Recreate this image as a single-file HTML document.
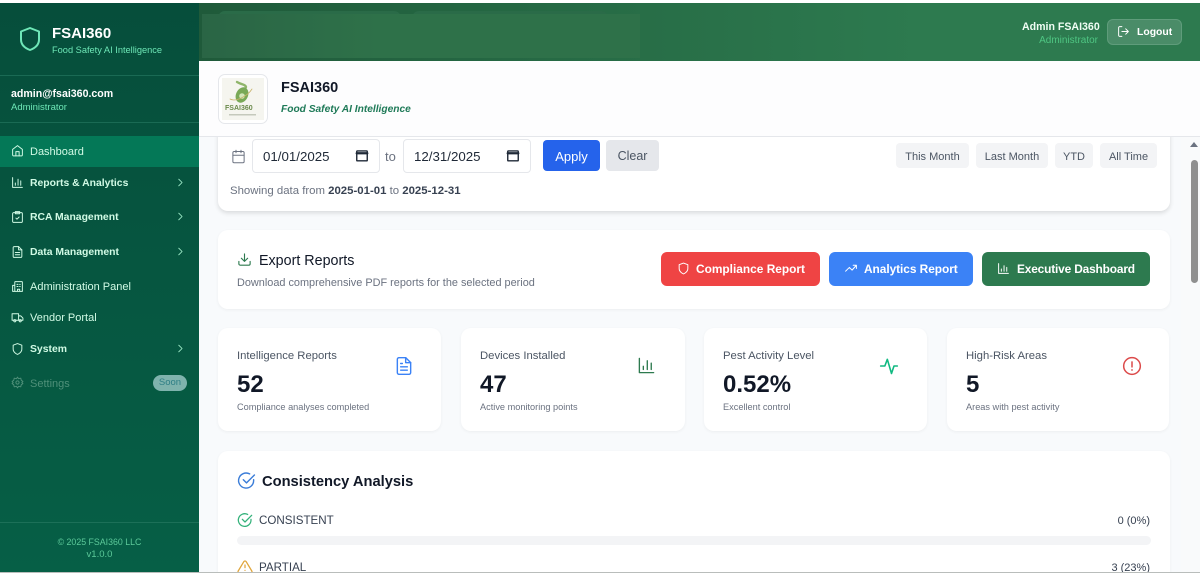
<!DOCTYPE html>
<html lang="en"><head><meta charset="utf-8"><title>FSAI360</title>
<style>
*{box-sizing:border-box;margin:0;padding:0}
html,body{width:1200px;height:573px;overflow:hidden;background:#fff;font-family:"Liberation Sans",sans-serif}
#r{position:relative;width:1200px;height:573px;overflow:hidden}
.a{position:absolute}
.t{position:absolute;white-space:nowrap;line-height:1}
svg{position:absolute;fill:none;stroke:currentColor;stroke-width:2;stroke-linecap:round;stroke-linejoin:round}
#side{left:0;top:3px;width:199px;height:569px;background:linear-gradient(180deg,#064e3b,#065f46)}
.nav{color:#d1fae5;font-size:11px}
.nb{font-weight:bold;font-size:10.4px;color:#d1fae5}
.card{position:absolute;background:#fff;border-radius:10px;box-shadow:0 1px 3px rgba(0,0,0,.05)}
.chip{position:absolute;top:143px;height:25px;background:#f3f4f6;border-radius:4px;color:#4b5563;font-size:11px;line-height:28px;text-align:center}
.inp{position:absolute;top:139px;height:34px;background:#fff;border:1px solid #e5e7eb;border-radius:4px;font-size:13.3px;color:#1f2937;line-height:34px;padding-left:10px}
.btn{position:absolute;top:252px;height:34px;border-radius:6px;color:#fff;font-size:11.9px;font-weight:bold;line-height:35px}
.lab{font-size:11.3px;color:#4b5563;top:351px}
.num{font-size:24px;font-weight:bold;color:#111827;top:373px}
.sub{font-size:9.2px;color:#6b7280;top:403px}
</style></head><body><div id="r">
<div class="a" style="left:0;top:0;width:1200px;height:3px;background:#fff"></div>

<!-- main background -->
<div class="a" style="left:199px;top:61px;width:1001px;height:511px;background:#f8fafc"></div>

<!-- top header -->
<div class="a" style="left:199px;top:3px;width:1001px;height:58px;background:linear-gradient(90deg,#1f5a3a,#2d7a4f 72%,#2d7a4f)"></div>
<div class="a" style="left:218px;top:11px;width:183px;height:10px;border-radius:7px 7px 0 0;background:#2a6b48"></div>
<div class="a" style="left:412px;top:11px;width:196px;height:10px;border-radius:7px 7px 0 0;background:#2a6b48"></div>
<div class="a" style="left:202px;top:14px;width:438px;height:44px;background:linear-gradient(90deg,#2a6545,#2e7149 40%)"></div>
<div class="t" style="left:1022px;top:22px;font-size:10.6px;font-weight:bold;color:#f0fdf4">Admin FSAI360</div>
<div class="t" style="right:102px;top:36px;font-size:10px;color:#4fc683">Administrator</div>
<div class="a" style="left:1107px;top:19px;width:75px;height:26px;border-radius:6px;background:#4a8c68;border:1px solid #5f9c7b"></div>
<svg style="left:1117px;top:25px;color:#fff;stroke-width:1.8" width="13" height="13" viewBox="0 0 24 24"><path d="M9 21H5a2 2 0 0 1-2-2V5a2 2 0 0 1 2-2h4M16 17l5-5-5-5M21 12H9"/></svg>
<div class="t" style="left:1137px;top:28px;font-size:10.4px;font-weight:bold;color:#fff">Logout</div>

<!-- page title bar -->
<div class="a" style="left:199px;top:61px;width:1001px;height:76px;background:#fdfdfe;border-bottom:1px solid #e5e7eb;z-index:3"></div>
<div class="a" style="left:218px;top:74px;width:50px;height:50px;background:#fff;border:1px solid #e5e7eb;border-radius:7px;z-index:4"></div>
<svg style="left:222px;top:78px;z-index:5;stroke-width:1.5" width="42" height="42" viewBox="0 0 42 42">
<rect x="0" y="0" width="42" height="42" fill="#f5f5ef" stroke="none"/>
<path d="M15 4c5 3 8 2 9 5-1 3-4 4-6 5" stroke="#8fb56a" stroke-width="2.4"/>
<ellipse cx="20" cy="17" rx="6" ry="8" fill="#79a957" stroke="none" transform="rotate(25 20 17)"/>
<circle cx="20" cy="18" r="2.8" fill="#d3e6bb" stroke="none"/>
<path d="M8 21c5 3 17-2 22-10" stroke="#c9b36a" stroke-width=".8"/>
<text x="3" y="32" font-family="Liberation Sans" font-weight="bold" font-size="7" fill="#6b8a4c" stroke="none">FSAI360</text>
<rect x="7" y="36" width="27" height="1.5" fill="#c5c9bc" stroke="none"/>
</svg>
<div class="t" style="left:281px;top:81px;font-size:14.5px;font-weight:bold;color:#111827;z-index:4">FSAI360</div>
<div class="t" style="left:281px;top:105px;font-size:10.2px;font-weight:bold;font-style:italic;color:#1f7a58;z-index:4">Food Safety AI Intelligence</div>

<!-- date filter card -->
<div class="card" style="left:218px;top:120px;width:952px;height:91px;box-shadow:0 2px 5px rgba(0,0,0,.13)"></div>
<svg style="left:231px;top:149px;color:#6b7280;stroke-width:1.6" width="15" height="15" viewBox="0 0 24 24"><rect x="3" y="4" width="18" height="18" rx="2"/><path d="M16 2v4M8 2v4M3 10h18"/></svg>
<div class="inp" style="left:252px;width:128px">01/01/2025</div>
<svg style="left:355px;top:148px;color:#1f2937;stroke-width:2.4" width="14" height="14" viewBox="0 0 24 24"><rect x="3" y="5" width="18" height="17" rx="1"/><path d="M3 9h18" stroke-width="4"/></svg>
<div class="t" style="left:385px;top:150px;font-size:13px;color:#6b7280">to</div>
<div class="inp" style="left:403px;width:128px">12/31/2025</div>
<svg style="left:506px;top:148px;color:#1f2937;stroke-width:2.4" width="14" height="14" viewBox="0 0 24 24"><rect x="3" y="5" width="18" height="17" rx="1"/><path d="M3 9h18" stroke-width="4"/></svg>
<div class="a" style="left:543px;top:140px;width:57px;height:31px;background:#2563eb;border-radius:4px;color:#fff;font-size:13px;text-align:center;line-height:33px">Apply</div>
<div class="a" style="left:606px;top:140px;width:53px;height:31px;background:#e5e7eb;border-radius:4px;color:#4b5563;font-size:12.5px;text-align:center;line-height:33px">Clear</div>
<div class="chip" style="left:896px;width:73px">This Month</div>
<div class="chip" style="left:976px;width:72px">Last Month</div>
<div class="chip" style="left:1055px;width:38px">YTD</div>
<div class="chip" style="left:1100px;width:57px">All Time</div>
<div class="t" style="left:230px;top:186px;font-size:11.4px;color:#6b7280">Showing data from <b style="color:#374151">2025-01-01</b> to <b style="color:#374151">2025-12-31</b></div>

<!-- export card -->
<div class="card" style="left:218px;top:230px;width:952px;height:79px"></div>
<svg style="left:237px;top:252px;color:#2d7a4f;stroke-width:1.8" width="15" height="15" viewBox="0 0 24 24"><path d="M21 15v4a2 2 0 0 1-2 2H5a2 2 0 0 1-2-2v-4M7 10l5 5 5-5M12 15V3"/></svg>
<div class="t" style="left:259px;top:254px;font-size:14.3px;color:#111827">Export Reports</div>
<div class="t" style="left:237px;top:278px;font-size:10.9px;color:#6b7280">Download comprehensive PDF reports for the selected period</div>
<div class="btn" style="left:661px;width:159px;background:#ef4444;padding-left:35px">Compliance Report</div>
<svg style="left:677px;top:262px;color:#fff;stroke-width:1.8" width="13" height="13" viewBox="0 0 24 24"><path d="M12 22s8-3 8-10V5l-8-3-8 3v7c0 7 8 10 8 10z"/></svg>
<div class="btn" style="left:829px;width:144px;background:#3b82f6;padding-left:35px;letter-spacing:-.05px">Analytics Report</div>
<svg style="left:844px;top:262px;color:#fff;stroke-width:1.8" width="14" height="13" viewBox="0 0 24 24"><path d="M2 17l7-7 5 5 8-9M16 6h6v6"/></svg>
<div class="btn" style="left:982px;width:168px;background:#2d7a4f;padding-left:35px;letter-spacing:-.16px">Executive Dashboard</div>
<svg style="left:997px;top:262px;color:#fff;stroke-width:1.8" width="13" height="13" viewBox="0 0 24 24"><path d="M3 3v18h18M8 17v-4M13 17V7M18 17v-7"/></svg>

<!-- stat cards -->
<div class="card" style="left:218px;top:328px;width:223px;height:103px"></div>
<div class="card" style="left:461px;top:328px;width:224px;height:103px"></div>
<div class="card" style="left:704px;top:328px;width:223px;height:103px"></div>
<div class="card" style="left:947px;top:328px;width:222px;height:103px"></div>
<div class="t lab" style="left:237px">Intelligence Reports</div>
<div class="t num" style="left:237px">52</div>
<div class="t sub" style="left:237px">Compliance analyses completed</div>
<svg style="left:394px;top:356px;color:#3b82f6;stroke-width:1.7" width="20" height="20" viewBox="0 0 24 24"><path d="M14 2H6a2 2 0 0 0-2 2v16a2 2 0 0 0 2 2h12a2 2 0 0 0 2-2V8z"/><path d="M14 2v6h6M8 13h8M8 17h8M8 9h2"/></svg>
<div class="t lab" style="left:480px">Devices Installed</div>
<div class="t num" style="left:480px">47</div>
<div class="t sub" style="left:480px">Active monitoring points</div>
<svg style="left:637px;top:356px;color:#2d7a4f;stroke-width:1.7" width="19" height="19" viewBox="0 0 24 24"><path d="M3 3v18h18M8 17v-4M13 17V6M18 17v-8"/></svg>
<div class="t lab" style="left:723px">Pest Activity Level</div>
<div class="t num" style="left:723px">0.52%</div>
<div class="t sub" style="left:723px">Excellent control</div>
<svg style="left:879px;top:356px;color:#10b981;stroke-width:1.9" width="20" height="20" viewBox="0 0 24 24"><path d="M2 12h5l3-8 5 17 3-9h4"/></svg>
<div class="t lab" style="left:966px">High-Risk Areas</div>
<div class="t num" style="left:966px">5</div>
<div class="t sub" style="left:966px">Areas with pest activity</div>
<svg style="left:1122px;top:356px;color:#dc4a4a;stroke-width:1.8" width="20" height="20" viewBox="0 0 24 24"><circle cx="12" cy="12" r="10"/><path d="M12 7v6M12 16.5v.5"/></svg>

<!-- consistency -->
<div class="card" style="left:218px;top:451px;width:952px;height:130px"></div>
<svg style="left:237px;top:471px;color:#3b7dd8;stroke-width:1.8" width="19" height="19" viewBox="0 0 24 24"><path d="M21 11v1a9.5 9.5 0 1 1-5-8.3"/><path d="M8 11l4 4 10-10"/></svg>
<div class="t" style="left:262px;top:475px;font-size:14.7px;font-weight:bold;color:#111827">Consistency Analysis</div>
<svg style="left:237px;top:512px;color:#34b27b;stroke-width:1.9" width="16" height="16" viewBox="0 0 24 24"><path d="M21 11v1a9.5 9.5 0 1 1-5-8.3"/><path d="M8 11l4 4 10-10"/></svg>
<div class="t" style="left:259px;top:515px;font-size:11.6px;color:#374151">CONSISTENT</div>
<div class="t" style="right:50px;top:516px;font-size:11px;color:#374151">0 (0%)</div>
<div class="a" style="left:237px;top:536px;width:914px;height:9px;border-radius:5px;background:#f3f4f6"></div>
<svg style="left:237px;top:559px;color:#e0a63c;stroke-width:1.9" width="16" height="16" viewBox="0 0 24 24"><path d="M10.3 3.9L1.8 18a2 2 0 0 0 1.7 3h17a2 2 0 0 0 1.7-3L13.7 3.9a2 2 0 0 0-3.4 0zM12 9v4M12 17h.01"/></svg>
<div class="t" style="left:259px;top:562px;font-size:11.6px;color:#374151">PARTIAL</div>
<div class="t" style="right:50px;top:563px;font-size:11px;color:#374151">3 (23%)</div>

<!-- scrollbar -->
<div class="a" style="left:1181px;top:137px;width:19px;height:435px;background:#f9fafb"></div>
<div class="a" style="left:1190px;top:142px;width:0;height:0;border-left:4px solid transparent;border-right:4px solid transparent;border-bottom:5px solid #6b7280"></div>
<div class="a" style="left:1191px;top:160px;width:7px;height:123px;border-radius:4px;background:#8f8f8f"></div>

<!-- sidebar -->
<div id="side" class="a"></div>
<svg style="left:19px;top:26px;color:#6ee7b7;stroke-width:2" width="22" height="26" viewBox="0 0 22 26"><path d="M11 2l9 3.5v8c0 6-5 9-9 10.5-4-1.5-9-4.5-9-10.500v-8z"/></svg>
<div class="t" style="left:52px;top:26px;font-size:15px;font-weight:bold;color:#fff">FSAI360</div>
<div class="t" style="left:52px;top:46px;font-size:9.25px;color:#6ee7b7">Food Safety AI Intelligence</div>
<div class="a" style="left:0;top:75px;width:199px;height:1px;background:#1a6a54"></div>
<div class="t" style="left:11px;top:89px;font-size:10.6px;font-weight:bold;color:#fff">admin@fsai360.com</div>
<div class="t" style="left:11px;top:103px;font-size:9.5px;color:#6ee7b7">Administrator</div>
<div class="a" style="left:0;top:122px;width:199px;height:1px;background:#1a6a54"></div>
<div class="a" style="left:0;top:136px;width:199px;height:31px;background:#047857"></div>

<svg style="left:11px;top:144px;color:#d1fae5;stroke-width:1.8" width="13" height="13" viewBox="0 0 24 24"><path d="M3 10l9-7 9 7v10a2 2 0 0 1-2 2H5a2 2 0 0 1-2-2z"/><path d="M9 22v-8h6v8"/></svg>
<div class="t nav" style="left:30px;top:147px">Dashboard</div>
<svg style="left:11px;top:176px;color:#d1fae5;stroke-width:1.8" width="13" height="13" viewBox="0 0 24 24"><path d="M3 3v18h18M8 17v-4M13 17V6M18 17v-8"/></svg>
<div class="t nb" style="left:30px;top:179px">Reports &amp; Analytics</div>
<svg style="left:175px;top:177px;color:#a7f3d0" width="10" height="11" viewBox="0 0 24 24"><path d="M9 4l8 8-8 8"/></svg>
<svg style="left:11px;top:210px;color:#d1fae5;stroke-width:1.8" width="13" height="14" viewBox="0 0 24 24"><rect x="3" y="4" width="18" height="18" rx="2"/><path d="M8 2h8v4H8zM9 14l2 2 4-4"/></svg>
<div class="t nb" style="left:30px;top:213px">RCA Management</div>
<svg style="left:175px;top:211px;color:#a7f3d0" width="10" height="11" viewBox="0 0 24 24"><path d="M9 4l8 8-8 8"/></svg>
<svg style="left:11px;top:245px;color:#d1fae5;stroke-width:1.8" width="13" height="14" viewBox="0 0 24 24"><path d="M14 2H6a2 2 0 0 0-2 2v16a2 2 0 0 0 2 2h12a2 2 0 0 0 2-2V8z"/><path d="M14 2v6h6M8 13h8M8 17h8"/></svg>
<div class="t nb" style="left:30px;top:248px">Data Management</div>
<svg style="left:175px;top:246px;color:#a7f3d0" width="10" height="11" viewBox="0 0 24 24"><path d="M9 4l8 8-8 8"/></svg>
<svg style="left:11px;top:280px;color:#d1fae5;stroke-width:1.8" width="13" height="13" viewBox="0 0 24 24"><path d="M7 21V4a1 1 0 0 1 1-1h12a1 1 0 0 1 1 1v17zM7 10H3v11h4M11 8h2M16 8h1M11 12h2M16 12h1M12 21v-4h4v4"/></svg>
<div class="t nav" style="left:30px;top:282px">Administration Panel</div>
<svg style="left:11px;top:311px;color:#d1fae5;stroke-width:1.8" width="13" height="13" viewBox="0 0 24 24"><path d="M2 5h12v12H2zM14 9h4l4 4v4h-8z"/><circle cx="7" cy="18" r="2"/><circle cx="17" cy="18" r="2"/></svg>
<div class="t nav" style="left:30px;top:313px">Vendor Portal</div>
<svg style="left:11px;top:342px;color:#d1fae5;stroke-width:1.8" width="13" height="14" viewBox="0 0 24 24"><path d="M12 22s8-3 8-10V5l-8-3-8 3v7c0 7 8 10 8 10z"/></svg>
<div class="t nb" style="left:30px;top:345px">System</div>
<svg style="left:175px;top:343px;color:#a7f3d0" width="10" height="11" viewBox="0 0 24 24"><path d="M9 4l8 8-8 8"/></svg>
<svg style="left:11px;top:376px;color:#4f9079;stroke-width:1.8" width="13" height="13" viewBox="0 0 24 24"><circle cx="12" cy="12" r="3"/><path d="M12 2l2 3 4-1 1 4 3 2-2 2 2 2-3 2-1 4-4-1-2 3-2-3-4 1-1-4-3-2 2-2-2-2 3-2 1-4 4 1z"/></svg>
<div class="t" style="left:30px;top:379px;font-size:11px;color:#4f9079">Settings</div>
<div class="a" style="left:153px;top:375px;width:34px;height:16px;border-radius:8px;background:#7fb3ad;color:#2f7f86;font-size:9.5px;text-align:center;line-height:16px">Soon</div>
<div class="a" style="left:0;top:522px;width:199px;height:1px;background:#1c7058"></div>
<div class="t" style="left:0;width:199px;text-align:center;top:538px;font-size:8.8px;color:#5cc99a">© 2025 FSAI360 LLC</div>
<div class="t" style="left:0;width:199px;text-align:center;top:550px;font-size:9.5px;color:#5cc99a">v1.0.0</div>

<!-- bottom edge -->
<div class="a" style="left:0;top:572px;width:1200px;height:1px;background:#b9bdbb;z-index:9"></div>
</div></body></html>
